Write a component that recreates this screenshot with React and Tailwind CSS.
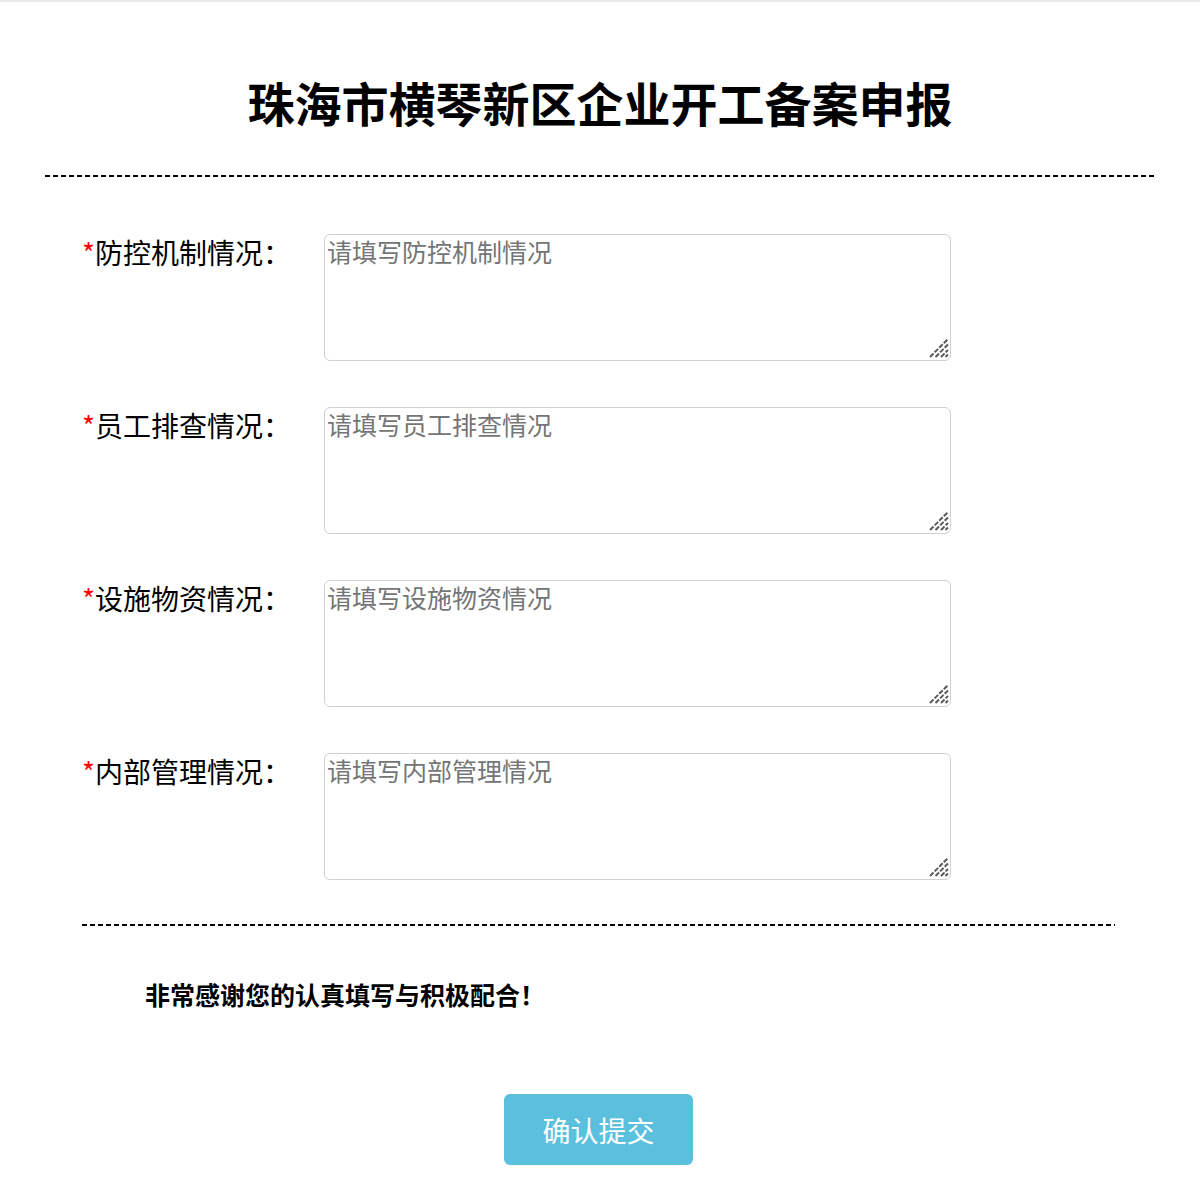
import { useState } from 'react';

const fields = [
    { key: 'fk', label: '防控机制情况' },
    { key: 'yg', label: '员工排查情况' },
    { key: 'ss', label: '设施物资情况' },
    { key: 'nb', label: '内部管理情况' },
];

function Grip() {
    return (
        <svg
            className="absolute right-[2px] bottom-[3px] pointer-events-none"
            width="21"
            height="21"
            viewBox="0 0 21 21"
        >
            <g stroke="#5a5a5a" strokeWidth="2" strokeDasharray="5 1.5">
                <line x1="2" y1="20" x2="20" y2="2" />
                <line x1="7.5" y1="20" x2="20" y2="7.5" />
                <line x1="13" y1="20" x2="20" y2="13" />
                <line x1="17.5" y1="20" x2="20" y2="17.5" />
            </g>
        </svg>
    );
}

export default function App() {
    const [values, setValues] = useState({});

    return (
        <div
            className="min-h-[1181px] bg-white border-t-2 border-[#ebebeb] text-black"
            style={{ fontFamily: '"Noto Sans CJK SC", "Noto Sans", sans-serif' }}
        >
            {/* Header */}
            <h1 className="pt-[64px] text-center text-[47px] font-bold leading-[72px]">
                珠海市横琴新区企业开工备案申报
            </h1>
            <div className="mx-[45px] mt-[37px] h-[2px] bg-[repeating-linear-gradient(90deg,#000_0_5px,transparent_5px_8px)]" />

            {/* Form */}
            <div className="ml-[82px] mr-[85px] mt-[57px]">
                <div className="flex flex-col gap-[46px]">
                    {fields.map((f) => (
                        <div key={f.key} className="flex items-start">
                            <label className="w-[242px] shrink-0 text-[28px] leading-[40px] -mt-[2px]">
                                <span className="text-[#ff0000]">*</span>
                                {f.label}：
                            </label>
                            <div className="relative">
                                <textarea
                                    className="block w-[627px] h-[127px] resize-none rounded-[6px] border border-[#d0d0d0] px-[2px] pt-0 text-[25px] leading-[33px] placeholder-[#757575] outline-none"
                                    placeholder={'请填写' + f.label}
                                    value={values[f.key] || ''}
                                    onChange={(e) => setValues({ ...values, [f.key]: e.target.value })}
                                />
                                <Grip />
                            </div>
                        </div>
                    ))}
                </div>

                <div className="mt-[44px] h-[2px] bg-[repeating-linear-gradient(90deg,#000_0_5px,transparent_5px_8px)]" />

                <p className="ml-[63px] mt-[51px] text-[25px] font-bold leading-[34px]">
                    非常感谢您的认真填写与积极配合！
                </p>
            </div>

            {/* Submit */}
            <div className="flex justify-center mt-[83px] pb-[16px]">
                <button className="w-[189px] h-[71px] -ml-[3px] rounded-[6px] bg-[#5bc0de] text-white text-[28px] leading-none">
                    确认提交
                </button>
            </div>
        </div>
    );
}
